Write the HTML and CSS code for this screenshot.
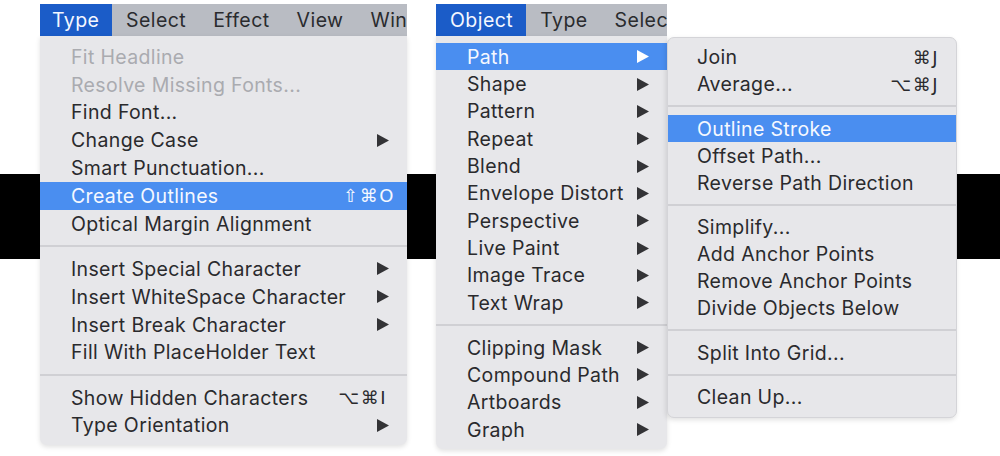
FILE: index.html
```html
<!DOCTYPE html>
<html>
<head>
<meta charset="utf-8">
<link rel="stylesheet" href="styles.css">
</head>
<body>
<div class="stage">
  <div class="menu menu-type">
    <div class="bar">
      <span class="title active">Type</span>
      <span class="title">Select</span>
      <span class="title">Effect</span>
      <span class="title">View</span>
      <span class="title">Win</span>
    </div>
    <div class="body">
      <div class="row disabled"><span>Fit Headline</span></div>
      <div class="row disabled"><span>Resolve Missing Fonts...</span></div>
      <div class="row"><span>Find Font...</span></div>
      <div class="row"><span>Change Case</span><svg class="arrow" viewBox="0 0 12 13"><polygon points="0,0 12,6.5 0,13"/></svg></div>
      <div class="row"><span>Smart Punctuation...</span></div>
      <div class="row sel"><span>Create Outlines</span><span class="key">⇧⌘O</span></div>
      <div class="row"><span>Optical Margin Alignment</span></div>
      <div class="sep"></div>
      <div class="row"><span>Insert Special Character</span><svg class="arrow" viewBox="0 0 12 13"><polygon points="0,0 12,6.5 0,13"/></svg></div>
      <div class="row"><span>Insert WhiteSpace Character</span><svg class="arrow" viewBox="0 0 12 13"><polygon points="0,0 12,6.5 0,13"/></svg></div>
      <div class="row"><span>Insert Break Character</span><svg class="arrow" viewBox="0 0 12 13"><polygon points="0,0 12,6.5 0,13"/></svg></div>
      <div class="row"><span>Fill With PlaceHolder Text</span></div>
      <div class="sep"></div>
      <div class="row"><span>Show Hidden Characters</span><span class="key k2">⌥⌘I</span></div>
      <div class="row"><span>Type Orientation</span><svg class="arrow" viewBox="0 0 12 13"><polygon points="0,0 12,6.5 0,13"/></svg></div>
    </div>
  </div>

  <div class="menu menu-object">
    <div class="bar">
      <span class="title active">Object</span>
      <span class="title">Type</span>
      <span class="title">Select</span>
    </div>
    <div class="body">
      <div class="row sel"><span>Path</span><svg class="arrow" viewBox="0 0 12 13"><polygon points="0,0 12,6.5 0,13"/></svg></div>
      <div class="row"><span>Shape</span><svg class="arrow" viewBox="0 0 12 13"><polygon points="0,0 12,6.5 0,13"/></svg></div>
      <div class="row"><span>Pattern</span><svg class="arrow" viewBox="0 0 12 13"><polygon points="0,0 12,6.5 0,13"/></svg></div>
      <div class="row"><span>Repeat</span><svg class="arrow" viewBox="0 0 12 13"><polygon points="0,0 12,6.5 0,13"/></svg></div>
      <div class="row"><span>Blend</span><svg class="arrow" viewBox="0 0 12 13"><polygon points="0,0 12,6.5 0,13"/></svg></div>
      <div class="row"><span>Envelope Distort</span><svg class="arrow" viewBox="0 0 12 13"><polygon points="0,0 12,6.5 0,13"/></svg></div>
      <div class="row"><span>Perspective</span><svg class="arrow" viewBox="0 0 12 13"><polygon points="0,0 12,6.5 0,13"/></svg></div>
      <div class="row"><span>Live Paint</span><svg class="arrow" viewBox="0 0 12 13"><polygon points="0,0 12,6.5 0,13"/></svg></div>
      <div class="row"><span>Image Trace</span><svg class="arrow" viewBox="0 0 12 13"><polygon points="0,0 12,6.5 0,13"/></svg></div>
      <div class="row"><span>Text Wrap</span><svg class="arrow" viewBox="0 0 12 13"><polygon points="0,0 12,6.5 0,13"/></svg></div>
      <div class="sep"></div>
      <div class="row"><span>Clipping Mask</span><svg class="arrow" viewBox="0 0 12 13"><polygon points="0,0 12,6.5 0,13"/></svg></div>
      <div class="row"><span>Compound Path</span><svg class="arrow" viewBox="0 0 12 13"><polygon points="0,0 12,6.5 0,13"/></svg></div>
      <div class="row"><span>Artboards</span><svg class="arrow" viewBox="0 0 12 13"><polygon points="0,0 12,6.5 0,13"/></svg></div>
      <div class="row"><span>Graph</span><svg class="arrow" viewBox="0 0 12 13"><polygon points="0,0 12,6.5 0,13"/></svg></div>
    </div>
  </div>

  <div class="menu submenu">
    <div class="body">
      <div class="row"><span>Join</span><span class="key">⌘J</span></div>
      <div class="row"><span>Average...</span><span class="key">⌥⌘J</span></div>
      <div class="sep"></div>
      <div class="row sel"><span>Outline Stroke</span></div>
      <div class="row"><span>Offset Path...</span></div>
      <div class="row"><span>Reverse Path Direction</span></div>
      <div class="sep"></div>
      <div class="row"><span>Simplify...</span></div>
      <div class="row"><span>Add Anchor Points</span></div>
      <div class="row"><span>Remove Anchor Points</span></div>
      <div class="row"><span>Divide Objects Below</span></div>
      <div class="sep"></div>
      <div class="row"><span>Split Into Grid...</span></div>
      <div class="sep"></div>
      <div class="row"><span>Clean Up...</span></div>
    </div>
  </div>
</div>
</body>
</html>
```

FILE: styles.css
```css
html, body {
  margin: 0;
  padding: 0;
}
body {
  font-family: Inter, "Liberation Sans", "DejaVu Sans", sans-serif;
  color: #2a2a2d;
}
.stage {
  width: 1000px;
  height: 456px;
  box-sizing: border-box;
  padding: 4px 0 0 40px;
  display: flex;
  align-items: flex-start;
  background: linear-gradient(to bottom, #fff 0, #fff 174px, #000 174px, #000 259px, #fff 259px, #fff 100%);
  overflow: hidden;
}
.menu {
  display: flex;
  flex-direction: column;
  flex: none;
}
.menu-type {
  width: 367px;
  --rh: 27.8px;
}
.menu-object {
  width: 231px;
  margin-left: 29px;
  --rh: 27.35px;
}
.submenu {
  width: 290px;
  margin-top: 33px;
  --rh: 27px;
}
.bar {
  height: 32px;
  background: #b9bcc3;
  display: flex;
  align-items: center;
  overflow: hidden;
  white-space: nowrap;
  font-size: 19.5px;
  letter-spacing: 0.45px;
  color: #2a2b2e;
}
.title {
  padding: 0 13.5px 0 13.5px;
  height: 32px;
  line-height: 32px;
  flex: none;
}
.menu-object .title {
  padding: 0 13px 0 14px;
}
.title.active {
  background: #1b5cc8;
  color: #f4f7ff;
}
.menu-type .title.active {
  padding: 0 13px 0 12px;
}
.body {
  background: #e7e7ea;
  border-radius: 0 0 7px 7px;
  padding: 7px 0 6px;
  box-shadow: 0 2px 5px rgba(0,0,0,0.12);
}
.menu-object .body {
  padding: 7px 0 5.5px;
}
.submenu .body {
  border-radius: 7px;
  padding: 5.5px 0 6px;
  border: 1px solid #d4d4d8;
  box-shadow: -1px 2px 5px rgba(0,0,0,0.12);
}
.row {
  height: var(--rh);
  display: flex;
  align-items: center;
  justify-content: space-between;
  padding: 0 18px 0 31px;
  font-size: 19.5px;
  letter-spacing: 0.35px;
  white-space: nowrap;
}
.submenu .row {
  padding: 0 17px 0 29px;
}
.row.disabled {
  color: #aaabb0;
}
.row.sel {
  background: #4a8ef0;
  color: #f5f8ff;
}
.arrow {
  width: 12px;
  height: 13px;
  fill: #333336;
  flex: none;
}
.sel .arrow {
  fill: #ffffff;
}
.key {
  font-family: "DejaVu Sans", sans-serif;
  font-size: 18px;
  letter-spacing: 1.5px;
  margin-right: -6px;
}
.key.k2 {
  margin-right: 2px;
}
.submenu .key {
  margin-right: 0;
}
.sep {
  height: 17.5px;
  display: flex;
  align-items: center;
}
.sep::before {
  content: "";
  display: block;
  width: 100%;
  height: 2px;
  background: #d0d0d4;
}
```
